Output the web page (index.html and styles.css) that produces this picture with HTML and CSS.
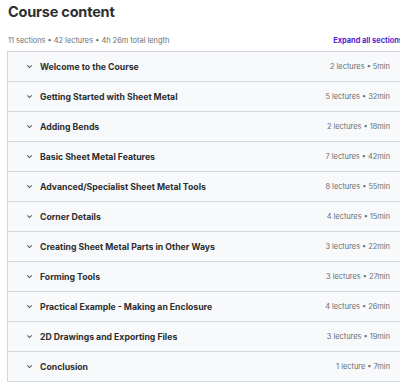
FILE: index.html
```html
<!DOCTYPE html>
<html lang="en">

<head>
    <meta charset="UTF-8">
    <meta name="viewport" content="width=device-width, initial-scale=1.0">
    <title>Course content</title>
    <link rel="stylesheet" href="styles.css">
</head>

<body>
    <div class="curriculum">
        <h2 class="title">Course content</h2>

        <div class="summary">
            <span>11 sections • 42 lectures • 4h 26m total length</span>
            <button class="expand-all">Expand all sections</button>
        </div>

        <div class="sections">
            <div class="section">
                <span class="chevron"><svg width="7" height="7" viewBox="0 0 8 8"><path d="M1.5 2.8 L4 5.2 L6.5 2.8" fill="none" stroke="#2d2f31" stroke-width="1.2"/></svg></span>
                <span class="section-title">Welcome to the Course</span>
                <span class="section-meta">2 lectures • 5min</span>
            </div>
            <div class="section">
                <span class="chevron"><svg width="7" height="7" viewBox="0 0 8 8"><path d="M1.5 2.8 L4 5.2 L6.5 2.8" fill="none" stroke="#2d2f31" stroke-width="1.2"/></svg></span>
                <span class="section-title">Getting Started with Sheet Metal</span>
                <span class="section-meta">5 lectures • 32min</span>
            </div>
            <div class="section">
                <span class="chevron"><svg width="7" height="7" viewBox="0 0 8 8"><path d="M1.5 2.8 L4 5.2 L6.5 2.8" fill="none" stroke="#2d2f31" stroke-width="1.2"/></svg></span>
                <span class="section-title">Adding Bends</span>
                <span class="section-meta">2 lectures • 18min</span>
            </div>
            <div class="section">
                <span class="chevron"><svg width="7" height="7" viewBox="0 0 8 8"><path d="M1.5 2.8 L4 5.2 L6.5 2.8" fill="none" stroke="#2d2f31" stroke-width="1.2"/></svg></span>
                <span class="section-title">Basic Sheet Metal Features</span>
                <span class="section-meta">7 lectures • 42min</span>
            </div>
            <div class="section">
                <span class="chevron"><svg width="7" height="7" viewBox="0 0 8 8"><path d="M1.5 2.8 L4 5.2 L6.5 2.8" fill="none" stroke="#2d2f31" stroke-width="1.2"/></svg></span>
                <span class="section-title">Advanced/Specialist Sheet Metal Tools</span>
                <span class="section-meta">8 lectures • 55min</span>
            </div>
            <div class="section">
                <span class="chevron"><svg width="7" height="7" viewBox="0 0 8 8"><path d="M1.5 2.8 L4 5.2 L6.5 2.8" fill="none" stroke="#2d2f31" stroke-width="1.2"/></svg></span>
                <span class="section-title">Corner Details</span>
                <span class="section-meta">4 lectures • 15min</span>
            </div>
            <div class="section">
                <span class="chevron"><svg width="7" height="7" viewBox="0 0 8 8"><path d="M1.5 2.8 L4 5.2 L6.5 2.8" fill="none" stroke="#2d2f31" stroke-width="1.2"/></svg></span>
                <span class="section-title">Creating Sheet Metal Parts in Other Ways</span>
                <span class="section-meta">3 lectures • 22min</span>
            </div>
            <div class="section">
                <span class="chevron"><svg width="7" height="7" viewBox="0 0 8 8"><path d="M1.5 2.8 L4 5.2 L6.5 2.8" fill="none" stroke="#2d2f31" stroke-width="1.2"/></svg></span>
                <span class="section-title">Forming Tools</span>
                <span class="section-meta">3 lectures • 27min</span>
            </div>
            <div class="section">
                <span class="chevron"><svg width="7" height="7" viewBox="0 0 8 8"><path d="M1.5 2.8 L4 5.2 L6.5 2.8" fill="none" stroke="#2d2f31" stroke-width="1.2"/></svg></span>
                <span class="section-title">Practical Example - Making an Enclosure</span>
                <span class="section-meta">4 lectures • 26min</span>
            </div>
            <div class="section">
                <span class="chevron"><svg width="7" height="7" viewBox="0 0 8 8"><path d="M1.5 2.8 L4 5.2 L6.5 2.8" fill="none" stroke="#2d2f31" stroke-width="1.2"/></svg></span>
                <span class="section-title">2D Drawings and Exporting Files</span>
                <span class="section-meta">3 lectures • 19min</span>
            </div>
            <div class="section">
                <span class="chevron"><svg width="7" height="7" viewBox="0 0 8 8"><path d="M1.5 2.8 L4 5.2 L6.5 2.8" fill="none" stroke="#2d2f31" stroke-width="1.2"/></svg></span>
                <span class="section-title">Conclusion</span>
                <span class="section-meta">1 lecture • 7min</span>
            </div>
        </div>
    </div>
</body>

</html>
```

FILE: styles.css
```css
html,
body {
    margin: 0;
    overflow: hidden;
}

body {
    font-family: 'Inter', sans-serif;
    background-color: #fff;
    color: #2d2f31;
}

.curriculum {
    width: 402px;
    padding-left: 7px;
}

.title {
    font-size: 14.5px;
    font-weight: 700;
    margin: 0;
    padding: 1px 0 0 1px;
    line-height: 22px;
    letter-spacing: -0.2px;
}

.summary {
    display: flex;
    justify-content: space-between;
    align-items: center;
    height: 16px;
    margin-top: 9px;
    margin-bottom: 3px;
    padding-left: 1px;
    font-size: 7.4px;
    color: #6a6f73;
}

.expand-all {
    background: none;
    border: none;
    padding: 0;
    margin-right: 6px;
    font-family: inherit;
    font-size: 7.4px;
    font-weight: 700;
    color: #5624d0;
    white-space: nowrap;
}

.sections {
    border: 1px solid #d1d7dc;
    border-right: none;
}

.section {
    display: flex;
    align-items: center;
    height: 29px;
    padding: 0 19px 0 18px;
    background-color: #f7f9fa;
    border-bottom: 1px solid #d1d7dc;
}

.section:last-child {
    border-bottom: none;
}

.chevron {
    display: flex;
    width: 7px;
    margin-right: 7px;
    opacity: 0.8;
}

.section-title {
    flex: 1;
    font-size: 8.7px;
    font-weight: 700;
}

.section-meta {
    font-size: 7.4px;
    color: #6a6f73;
}
```
